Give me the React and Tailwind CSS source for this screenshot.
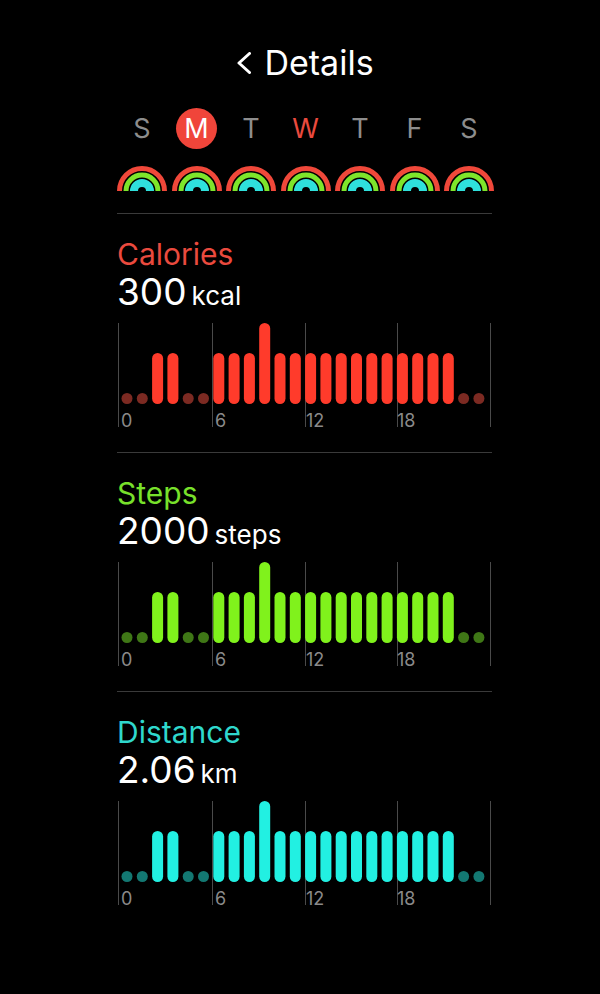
import React from "react";

const days = ["S", "M", "T", "W", "T", "F", "S"];

// d = dim dot, b = normal bar, t = tall bar
const pattern = [
  "d", "d", "b", "b", "d", "d", "b", "b", "b", "t", "b", "b",
  "b", "b", "b", "b", "b", "b", "b", "b", "b", "b", "d", "d",
];

const sections = [
  { title: "Calories", value: "300", unit: "kcal", label: "text-[#ea4a3e]", bar: "#ff3b2b", dot: "#7c2a22" },
  { title: "Steps", value: "2000", unit: "steps", label: "text-[#78e12b]", bar: "#80f21c", dot: "#3f7716" },
  { title: "Distance", value: "2.06", unit: "km", label: "text-[#2fd8cd]", bar: "#22f0e2", dot: "#137872" },
];

function Ring() {
  return (
    <svg width="50" height="25" viewBox="0 0 50 25" className="block">
      <path d="M2.5 25 A22.5 22.5 0 0 1 47.5 25" stroke="#f0483a" strokeWidth="5" fill="none" />
      <path d="M9 25 A16 16 0 0 1 41 25" stroke="#7ee52b" strokeWidth="5" fill="none" />
      <path d="M17 25 A8 8 0 0 1 33 25" stroke="#2fe0dc" strokeWidth="8" fill="none" />
    </svg>
  );
}

function HourChart({ bar, dot }) {
  const grid = [1, 95, 188, 280, 373];
  const labels = [["0", 4], ["6", 98], ["12", 189], ["18", 280]];
  return (
    <svg width="375" height="108" viewBox="0 0 375 108" className="block overflow-visible">
      {grid.map((x) => (
        <line key={x} x1={x + 0.5} x2={x + 0.5} y1="0" y2="104" stroke="#4a4a4a" strokeWidth="1" />
      ))}
      {pattern.map((p, i) => {
        const cx = 10 + i * 15.3;
        if (p === "d") return <circle key={i} cx={cx} cy="75.5" r="5.5" fill={dot} />;
        const top = p === "t" ? 0 : 30;
        return <rect key={i} x={cx - 5.5} y={top} width="11" height={81 - top} rx="5.5" fill={bar} />;
      })}
      {labels.map(([t, x]) => (
        <text key={t} x={x} y="104" fontSize="18" fill="#8a8a8a" fontFamily="Inter, sans-serif">
          {t}
        </text>
      ))}
    </svg>
  );
}

export default function App() {
  return (
    <div className="min-h-[994px] w-full bg-black pl-[117px] pt-[43px] font-['Inter',sans-serif] text-white">
      <div className="w-[377px]">
        {/* header */}
        <div className="flex h-[40px] items-center justify-center gap-[13px]">
          <svg width="14" height="22" viewBox="0 0 14 22">
            <polyline points="12.5,1.5 2,11 12.5,20.5" fill="none" stroke="#fff" strokeWidth="3" strokeLinecap="round" strokeLinejoin="round" />
          </svg>
          <span className="text-[34px] leading-none">Details</span>
        </div>

        {/* week */}
        <div className="mt-[24px] flex h-[42px] justify-between">
          {days.map((d, i) => (
            <div key={i} className="flex w-[50px] items-center justify-center">
              {i === 1 ? (
                <div className="flex h-[41px] w-[41px] items-center justify-center rounded-full bg-[#f0453a] text-[27px] leading-none">
                  {d}
                </div>
              ) : (
                <span className={`text-[27px] leading-none ${i === 3 ? "text-[#ea4a3e]" : "text-[#8d8d8d]"}`}>{d}</span>
              )}
            </div>
          ))}
        </div>

        <div className="mt-[17px] flex justify-between">
          {days.map((_, i) => (
            <Ring key={i} />
          ))}
        </div>

        {sections.map((s, idx) => (
          <div key={s.title}>
            <div className={`${idx === 0 ? "mt-[22px]" : "mt-[21px]"} h-px w-[375px] bg-[#3a3a3a]`} />
            <div className={`mt-[25px] text-[30px] leading-[30px] ${s.label}`}>{s.title}</div>
            <div className="mt-[4px] flex items-baseline leading-[37px]">
              <span className="text-[37px]">{s.value}</span>
              <span className="ml-[5px] text-[26px]">{s.unit}</span>
            </div>
            <div className="mt-[9px]">
              <HourChart bar={s.bar} dot={s.dot} />
            </div>
          </div>
        ))}
      </div>
    </div>
  );
}
